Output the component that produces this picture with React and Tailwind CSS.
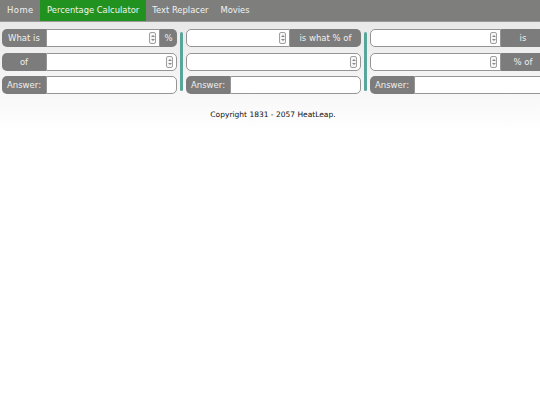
import React from "react";

const font = { fontFamily: '"DejaVu Sans", Verdana, sans-serif' };

function Spin() {
  return (
    <div className="absolute right-[3px] top-1/2 -translate-y-1/2 w-[7px] h-[12px] rounded-[2px] border border-[#a0a0a0] bg-[#f6f6f6] flex flex-col items-center justify-center gap-[2px]">
      <div className="w-0 h-0 border-l-[2px] border-r-[2px] border-b-[2px] border-l-transparent border-r-transparent border-b-[#8a8a8a]" />
      <div className="w-0 h-0 border-l-[2px] border-r-[2px] border-t-[2px] border-l-transparent border-r-transparent border-t-[#8a8a8a]" />
    </div>
  );
}

function Label({ children, className = "" }) {
  return (
    <div className={"h-[18px] bg-[#7b7c7b] text-[#f0f0f0] text-[8.5px] flex items-center justify-center shrink-0 " + className}>
      {children}
    </div>
  );
}

function Input({ spin, className = "" }) {
  return (
    <div className={"relative h-[18px] bg-white border border-[#959595] grow " + className}>
      {spin && <Spin />}
    </div>
  );
}

function Bar() {
  return (
    <div className="w-[9px] shrink-0 flex justify-center pt-[3px] pb-[3px]">
      <div className="w-[3px] h-full bg-[#5aa59a] rounded-[2px]" />
    </div>
  );
}

export default function App() {
  return (
    <div className="min-h-[405px] bg-white" style={font}>
      <div className="h-[22px] bg-[#7e7f7d] flex items-stretch text-[8.4px] text-[#f2f2f2] border-b border-[#9a9b99]">
        <div className="w-[40px] pl-[7px] flex items-center tracking-[0.5px]">Home</div>
        <div className="pl-[7px] pr-[7px] flex items-center bg-[#21921f]">Percentage Calculator</div>
        <div className="px-[6px] flex items-center">Text Replacer</div>
        <div className="px-[6px] flex items-center">Movies</div>
      </div>
      <div className="bg-gradient-to-b from-[#e8e9e8] to-white h-[110px] overflow-hidden">
        <div className="flex pt-[7px] pl-[2px] w-[560px]">
          {/* Section 1 */}
          <div className="w-[175px] shrink-0 flex flex-col gap-[6px]">
            <div className="flex">
              <Label className="w-[44px] rounded-l-[5px]">What is</Label>
              <Input spin />
              <Label className="w-[17px] rounded-r-[5px]">%</Label>
            </div>
            <div className="flex">
              <Label className="w-[44px] rounded-l-[5px]">of</Label>
              <Input spin className="rounded-r-[5px]" />
            </div>
            <div className="flex -mt-[1px]">
              <Label className="w-[44px] rounded-l-[5px]">Answer:</Label>
              <Input className="rounded-r-[5px]" />
            </div>
          </div>
          <Bar />
          {/* Section 2 */}
          <div className="w-[175px] shrink-0 flex flex-col gap-[6px]">
            <div className="flex">
              <Input spin className="rounded-l-[5px]" />
              <Label className="w-[71px] rounded-r-[5px]">is what % of</Label>
            </div>
            <div className="flex">
              <Input spin className="rounded-[5px]" />
            </div>
            <div className="flex -mt-[1px]">
              <Label className="w-[44px] rounded-l-[5px]">Answer:</Label>
              <Input className="rounded-r-[5px]" />
            </div>
          </div>
          <Bar />
          {/* Section 3 */}
          <div className="w-[175px] shrink-0 flex flex-col gap-[6px]">
            <div className="flex">
              <Input spin className="rounded-l-[5px]" />
              <Label className="w-[44px] rounded-r-[5px]">is</Label>
            </div>
            <div className="flex">
              <Input spin className="rounded-l-[5px]" />
              <Label className="w-[44px] rounded-r-[5px]">% of</Label>
            </div>
            <div className="flex -mt-[1px]">
              <Label className="w-[44px] rounded-l-[5px]">Answer:</Label>
              <Input className="rounded-r-[5px]" />
            </div>
          </div>
        </div>
        <div className="mt-[15px] flex justify-center pl-[6px] text-[7.5px] text-[#111]">
          Copyright 1831 - 2057 HeatLeap.
        </div>
      </div>
    </div>
  );
}
